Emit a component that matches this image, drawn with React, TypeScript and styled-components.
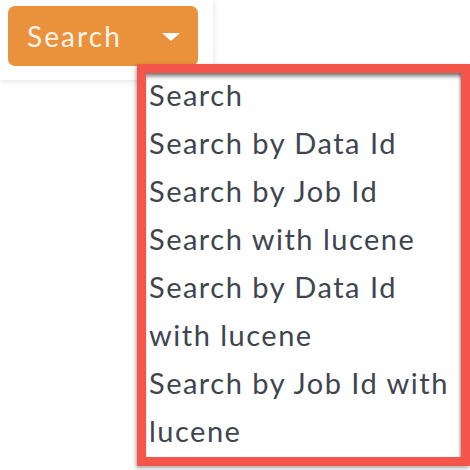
import styled, { createGlobalStyle } from "styled-components";

const GlobalStyle = createGlobalStyle`
  html, body {
    margin: 0;
    padding: 0;
    background: #ffffff;
  }
  body {
    font-family: Lato, "Open Sans", sans-serif;
  }
`;

const Page = styled.div`
  position: relative;
  width: 470px;
  height: 470px;
  overflow: hidden;
  background: #ffffff;
`;

const Toolbar = styled.div`
  width: 213px;
  height: 80px;
  padding: 6px 0 0 8px;
  box-sizing: border-box;
  background: #ffffff;
  box-shadow: 0 1px 6px rgba(0, 0, 0, 0.12);
`;

const SearchButton = styled.button`
  display: flex;
  align-items: center;
  justify-content: space-between;
  width: 190px;
  height: 60px;
  padding: 0 18px 0 19px;
  box-sizing: border-box;
  border: none;
  border-radius: 7px;
  background: #e9913b;
  color: #fdf3e8;
  font-family: Lato, "Open Sans", sans-serif;
  font-size: 28px;
  letter-spacing: 2.1px;
  cursor: pointer;
`;

const Caret = styled.span`
  width: 0;
  height: 0;
  margin-top: 2px;
  border-left: 9px solid transparent;
  border-right: 9px solid transparent;
  border-top: 8px solid #ffffff;
`;

const Menu = styled.ul`
  position: absolute;
  left: 137px;
  top: 64px;
  width: 333px;
  height: 402px;
  margin: 0;
  padding: 0 10px 0 3px;
  box-sizing: border-box;
  list-style: none;
  background: #ffffff;
  border: 9px solid #f6554b;
  box-shadow: inset 0 5px 4px -2px rgba(0, 0, 0, 0.55),
    inset -3px 0 3px -2px rgba(0, 0, 0, 0.35), -1px 2px 4px rgba(0, 0, 0, 0.35);
`;

const MenuItem = styled.li`
  color: #3e454f;
  font-family: Lato, "Open Sans", sans-serif;
  font-size: 29px;
  line-height: 48px;
  letter-spacing: 1.5px;

  &:first-child {
    margin-top: -2px;
  }
`;

const options = [
  "Search",
  "Search by Data Id",
  "Search by Job Id",
  "Search with lucene",
  "Search by Data Id with lucene",
  "Search by Job Id with lucene",
];

const App = () => {
  return (
    <Page>
      <GlobalStyle />
      <Toolbar>
        <SearchButton>
          Search
          <Caret />
        </SearchButton>
      </Toolbar>
      <Menu>
        {options.map((option) => (
          <MenuItem key={option}>{option}</MenuItem>
        ))}
      </Menu>
    </Page>
  );
};

export default App;
